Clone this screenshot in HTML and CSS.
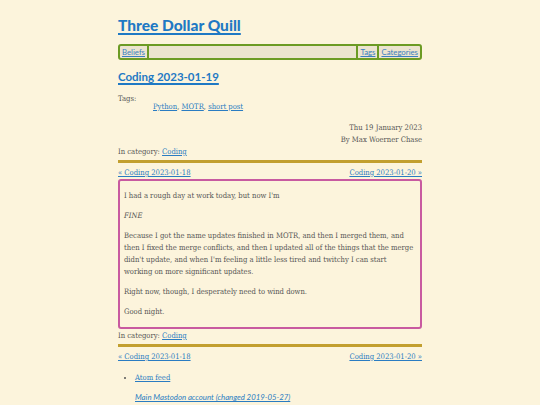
FILE: index.html
```html
<!DOCTYPE html>
<html lang="en">
<head>
<meta charset="utf-8">
<title>Coding 2023-01-19 - Three Dollar Quill</title>
<link rel="stylesheet" href="styles.css">
</head>
<body>
<div class="page">
  <header class="site-header">
    <h1 class="site-title"><a href="#">Three Dollar Quill</a></h1>
    <nav class="menu">
      <a class="menu-item" href="#">Beliefs</a>
      <span class="sep"></span>
      <span class="spacer"></span>
      <span class="sep"></span>
      <a class="menu-item" href="#">Tags</a>
      <span class="sep"></span>
      <a class="menu-item" href="#">Categories</a>
    </nav>
  </header>

  <main>
    <h2 class="post-title"><a href="#">Coding 2023-01-19</a></h2>
    <dl class="tags">
      <dt>Tags:</dt>
      <dd><a href="#">Python</a>, <a href="#">MOTR</a>, <a href="#">short post</a></dd>
    </dl>
    <div class="meta">
      <div>Thu 19 January 2023</div>
      <div>By Max Woerner Chase</div>
    </div>
    <div class="category">In category: <a href="#">Coding</a></div>
    <hr class="rule">
    <div class="pager">
      <a href="#">« Coding 2023-01-18</a>
      <a href="#">Coding 2023-01-20 »</a>
    </div>
    <article class="content">
      <p>I had a rough day at work today, but now I'm</p>
      <p><em>FINE</em></p>
      <p>Because I got the name updates finished in MOTR, and then I merged them, and then I fixed the merge conflicts, and then I updated all of the things that the merge didn't update, and when I'm feeling a little less tired and twitchy I can start working on more significant updates.</p>
      <p>Right now, though, I desperately need to wind down.</p>
      <p>Good night.</p>
    </article>
    <div class="category after">In category: <a href="#">Coding</a></div>
    <hr class="rule">
    <div class="pager">
      <a href="#">« Coding 2023-01-18</a>
      <a href="#">Coding 2023-01-20 »</a>
    </div>
  </main>

  <footer class="site-footer">
    <ul class="links">
      <li><a href="#">Atom feed</a></li>
    </ul>
    <p class="mastodon"><a href="#"><em>Main Mastodon account (changed 2019-05-27)</em></a></p>
  </footer>
</div>
</body>
</html>
```

FILE: styles.css
```css
html, body {
  margin: 0;
  padding: 0;
  background: #fcf4dc;
}
body {
  font-family: "DejaVu Serif Condensed", "DejaVu Serif", "Liberation Serif", serif;
  font-stretch: condensed;
  font-size: 7.6px;
  color: #555555;
}
a {
  color: #2a7cc2;
}
.page {
  width: 304px;
  margin: 0 auto;
  padding-top: 14px;
}
.site-title {
  margin: 0;
  font-family: "Lato", "Liberation Sans", sans-serif;
  font-stretch: normal;
  font-weight: 900;
  font-size: 15.5px;
  line-height: 22px;
}
.site-title a {
  color: #1f79c4;
  text-decoration-thickness: 2px;
  text-underline-offset: 2px;
}
.menu {
  margin-top: 8px;
  display: flex;
  align-items: stretch;
  height: 12px;
  border: 2px solid #6c9b24;
  border-radius: 3px;
  background: #ece4cf;
  font-family: "Lato", "Liberation Sans", sans-serif;
  font-stretch: normal;
  font-size: 7.8px;
  line-height: 12px;
}
.menu-item {
  padding: 0 2px;
  color: #3a7fbf;
}
.sep {
  width: 2px;
  background: #6c9b24;
}
.spacer {
  flex: 1;
}
.post-title {
  margin: 8px 0 0;
  font-family: "Lato", "Liberation Sans", sans-serif;
  font-stretch: normal;
  font-weight: 700;
  font-size: 11.5px;
  line-height: 18px;
}
.post-title a {
  color: #1f79c4;
  text-decoration-thickness: 1.5px;
  text-underline-offset: 1.5px;
}
.tags {
  margin: 9px 0 0;
  line-height: 7.5px;
}
.tags dt {
  margin: 0;
}
.tags dd {
  margin: 0 0 0 35px;
}
.meta {
  margin-top: 12px;
  text-align: right;
  line-height: 12px;
}
.category {
  line-height: 12px;
}
.category.after {
  margin-top: 1px;
}
.rule {
  margin: 2px 0 0;
  border: 0;
  height: 3px;
  background: #c29f2f;
}
.pager {
  margin-top: 4px;
  display: flex;
  justify-content: space-between;
  line-height: 12px;
}
.content {
  border: 2px solid #c85aa0;
  border-radius: 3px;
  padding: 1px 4px;
  line-height: 12px;
}
.content p {
  margin: 8px 0;
}
.site-footer {
  margin-top: 9px;
}
.links {
  margin: 0;
  padding-left: 17px;
  line-height: 12px;
}
.mastodon {
  margin: 7px 0 0 17px;
  line-height: 12px;
  font-family: "Lato", "Liberation Sans", sans-serif;
  font-stretch: normal;
  font-size: 7.8px;
}
```
